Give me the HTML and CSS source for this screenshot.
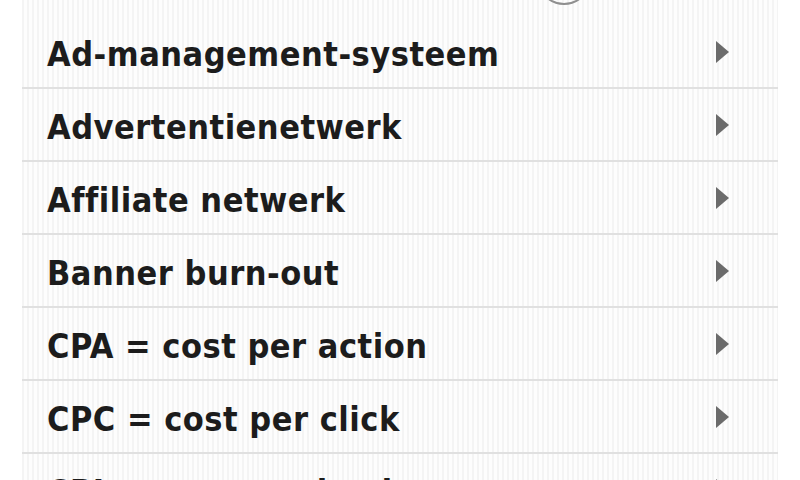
FILE: index.html
```html
<!DOCTYPE html>
<html>
<head>
<meta charset="utf-8">
<link rel="stylesheet" href="styles.css">
</head>
<body>
<div class="page">
  <div class="header"><span class="search-ring"></span></div>
  <ul class="list">
    <li class="row"><span class="label">Ad-management-systeem</span><span class="chev"></span></li>
    <li class="row"><span class="label">Advertentienetwerk</span><span class="chev"></span></li>
    <li class="row"><span class="label">Affiliate netwerk</span><span class="chev"></span></li>
    <li class="row"><span class="label">Banner burn-out</span><span class="chev"></span></li>
    <li class="row"><span class="label">CPA = cost per action</span><span class="chev"></span></li>
    <li class="row"><span class="label">CPC = cost per click</span><span class="chev"></span></li>
    <li class="row"><span class="label">CPL = cost per lead</span><span class="chev"></span></li>
  </ul>
</div>
</body>
</html>
```
FILE: styles.css
```css
html, body {
  margin: 0;
  padding: 0;
  background: #ffffff;
  width: 800px;
  height: 480px;
  overflow: hidden;
}
.page {
  margin: 0 22px;
  height: 480px;
  background-color: #fbfbfb;
  background-image: repeating-linear-gradient(90deg, #f4f4f4 0, #f4f4f4 2px, #fdfdfd 2px, #fdfdfd 5px);
  font-family: "DejaVu Sans Condensed", "DejaVu Sans", sans-serif;
}
.header {
  height: 16px;
  overflow: hidden;
  padding-left: 515px;
}
.search-ring {
  display: block;
  width: 54px;
  height: 54px;
  margin-top: -49px;
  border: 2px solid #8f8f8f;
  border-radius: 50%;
  box-sizing: border-box;
}
.list {
  list-style: none;
  margin: 0;
  padding: 0;
}
.row {
  display: flex;
  align-items: center;
  justify-content: space-between;
  height: 71px;
  border-bottom: 2px solid #e0e0e0;
  padding: 0 49px 0 25px;
}
.label {
  font-size: 34px;
  font-weight: bold;
  color: #1c1c1c;
  letter-spacing: 0.5px;
  line-height: 1;
  padding-top: 4px;
}
.chev {
  width: 0;
  height: 0;
  border-top: 11px solid transparent;
  border-bottom: 11px solid transparent;
  border-left: 13px solid #6b6b6b;
}
```
